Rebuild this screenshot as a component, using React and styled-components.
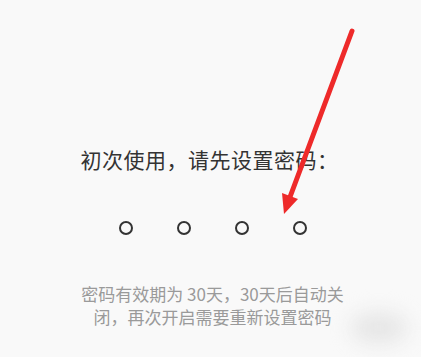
import React from "react";
import styled, { createGlobalStyle } from "styled-components";

const GlobalStyle = createGlobalStyle`
  html, body {
    margin: 0;
    padding: 0;
    background: #f9f9f9;
  }
  #root {
    width: 421px;
    height: 357px;
  }
`;

const Screen = styled.div`
  position: relative;
  display: flex;
  flex-direction: column;
  align-items: center;
  width: 421px;
  height: 357px;
  padding-top: 144px;
  box-sizing: border-box;
  overflow: hidden;
  background: #f9f9f9;
  font-family: "Noto Sans CJK SC", "Noto Sans", sans-serif;
`;

const Title = styled.div`
  font-size: 21px;
  line-height: 30px;
  color: #333333;
  margin-left: -2px;
  letter-spacing: 0.5px;
`;

const DotRow = styled.div`
  display: flex;
  gap: 44px;
  margin-top: 47px;
  margin-left: 5px;
`;

const Dot = styled.span`
  width: 14px;
  height: 14px;
  box-sizing: border-box;
  border: 2.2px solid #333333;
  border-radius: 50%;
`;

const Hint = styled.div`
  margin-top: 47px;
  margin-left: 4px;
  font-size: 17px;
  line-height: 23px;
  color: #9a9a9a;
  text-align: center;
`;

const Smudge = styled.div`
  position: absolute;
  left: 350px;
  top: 312px;
  width: 58px;
  height: 32px;
  border-radius: 50%;
  background: #e6e6e6;
  filter: blur(10px);
`;

const Arrow = styled.svg`
  position: absolute;
  left: 0;
  top: 0;
  pointer-events: none;
`;

export default function App() {
  return (
    <>
      <GlobalStyle />
      <Screen>
        <Title>初次使用，请先设置密码：</Title>
        <DotRow>
          {[0, 1, 2, 3].map((i) => (
            <Dot key={i} />
          ))}
        </DotRow>
        <Hint>
          密码有效期为 30天，30天后自动关
          <br />
          闭，再次开启需要重新设置密码
        </Hint>
        <Smudge />
        <Arrow width="421" height="357" viewBox="0 0 421 357">
          <line
            x1="352"
            y1="31"
            x2="290"
            y2="197"
            stroke="#ee2a2a"
            strokeWidth="5"
            strokeLinecap="round"
          />
          <polygon points="284,214 282,193 298,199" fill="#ee2a2a" />
        </Arrow>
      </Screen>
    </>
  );
}
